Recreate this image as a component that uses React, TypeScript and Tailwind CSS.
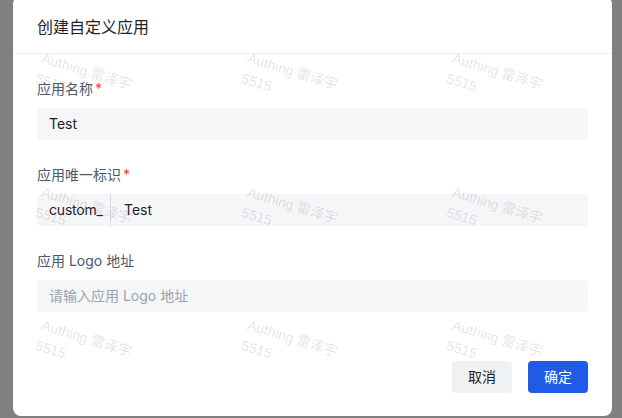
import React from "react";

const font = { fontFamily: 'Inter, "Noto Sans CJK SC", sans-serif' };

function Watermark({ left, top }: { left: number; top: number }) {
  return (
    <div
      className="absolute origin-top-left rotate-[17deg] whitespace-nowrap text-[14px] leading-[21px] text-[rgba(0,0,0,0.12)]"
      style={{ left, top, fontFamily: '"Liberation Sans", "Noto Sans CJK SC", sans-serif' }}
    >
      <div>Authing 雷泽宇</div>
      <div>5515</div>
    </div>
  );
}

export default function App() {
  const cols = [32, 238, 443];
  const rows = [52, 186, 319];
  return (
    <div className="h-[418px] w-[622px] overflow-hidden bg-[#808080] pl-[13px]" style={font}>
      <div className="relative -mt-[4px] flex h-[420px] w-[599px] flex-col rounded-lg bg-white">
        <div className="border-b border-[#ebedf0] px-6 pb-[14px] pt-[19px] text-base leading-6 text-[#1f2329]">
          创建自定义应用
        </div>
        <div className="px-6 pt-[25px]">
          <div className="mb-[9px] text-sm leading-5 text-[#4e5969]">
            应用名称<span className="ml-0.5 text-[#f53f3f]">*</span>
          </div>
          <div className="flex h-8 items-center rounded bg-[#f5f6f8] px-3 text-sm text-[#1f2329]">Test</div>

          <div className="mb-[9px] mt-[25px] text-sm leading-5 text-[#4e5969]">
            应用唯一标识<span className="ml-0.5 text-[#f53f3f]">*</span>
          </div>
          <div className="flex h-8 items-stretch rounded bg-[#f5f6f8] text-sm text-[#1f2329]">
            <div className="flex w-[73px] shrink-0 items-center pl-3 tracking-[-0.2px]">custom_</div>
            <div className="w-px shrink-0 bg-[#d8dbe0]" />
            <div className="flex items-center pl-[13px]">Test</div>
          </div>

          <div className="mb-[9px] mt-[25px] text-sm leading-5 text-[#4e5969]">应用 Logo 地址</div>
          <div className="flex h-8 items-center rounded bg-[#f5f6f8] px-3 text-sm text-[#9ca3af]">
            请输入应用 Logo 地址
          </div>
        </div>
        <div className="mt-auto flex justify-end gap-4 px-6 pb-[23px]">
          <button className="h-8 w-[60px] rounded bg-[#f0f1f3] text-sm text-[#1f2329]">取消</button>
          <button className="h-8 w-[60px] rounded bg-[#215ae5] text-sm text-white">确定</button>
        </div>
        <div className="pointer-events-none absolute inset-0 overflow-hidden rounded-lg">
          {rows.map((t) =>
            cols.map((l) => <Watermark key={`${t}-${l}`} left={l} top={t} />)
          )}
        </div>
      </div>
    </div>
  );
}
